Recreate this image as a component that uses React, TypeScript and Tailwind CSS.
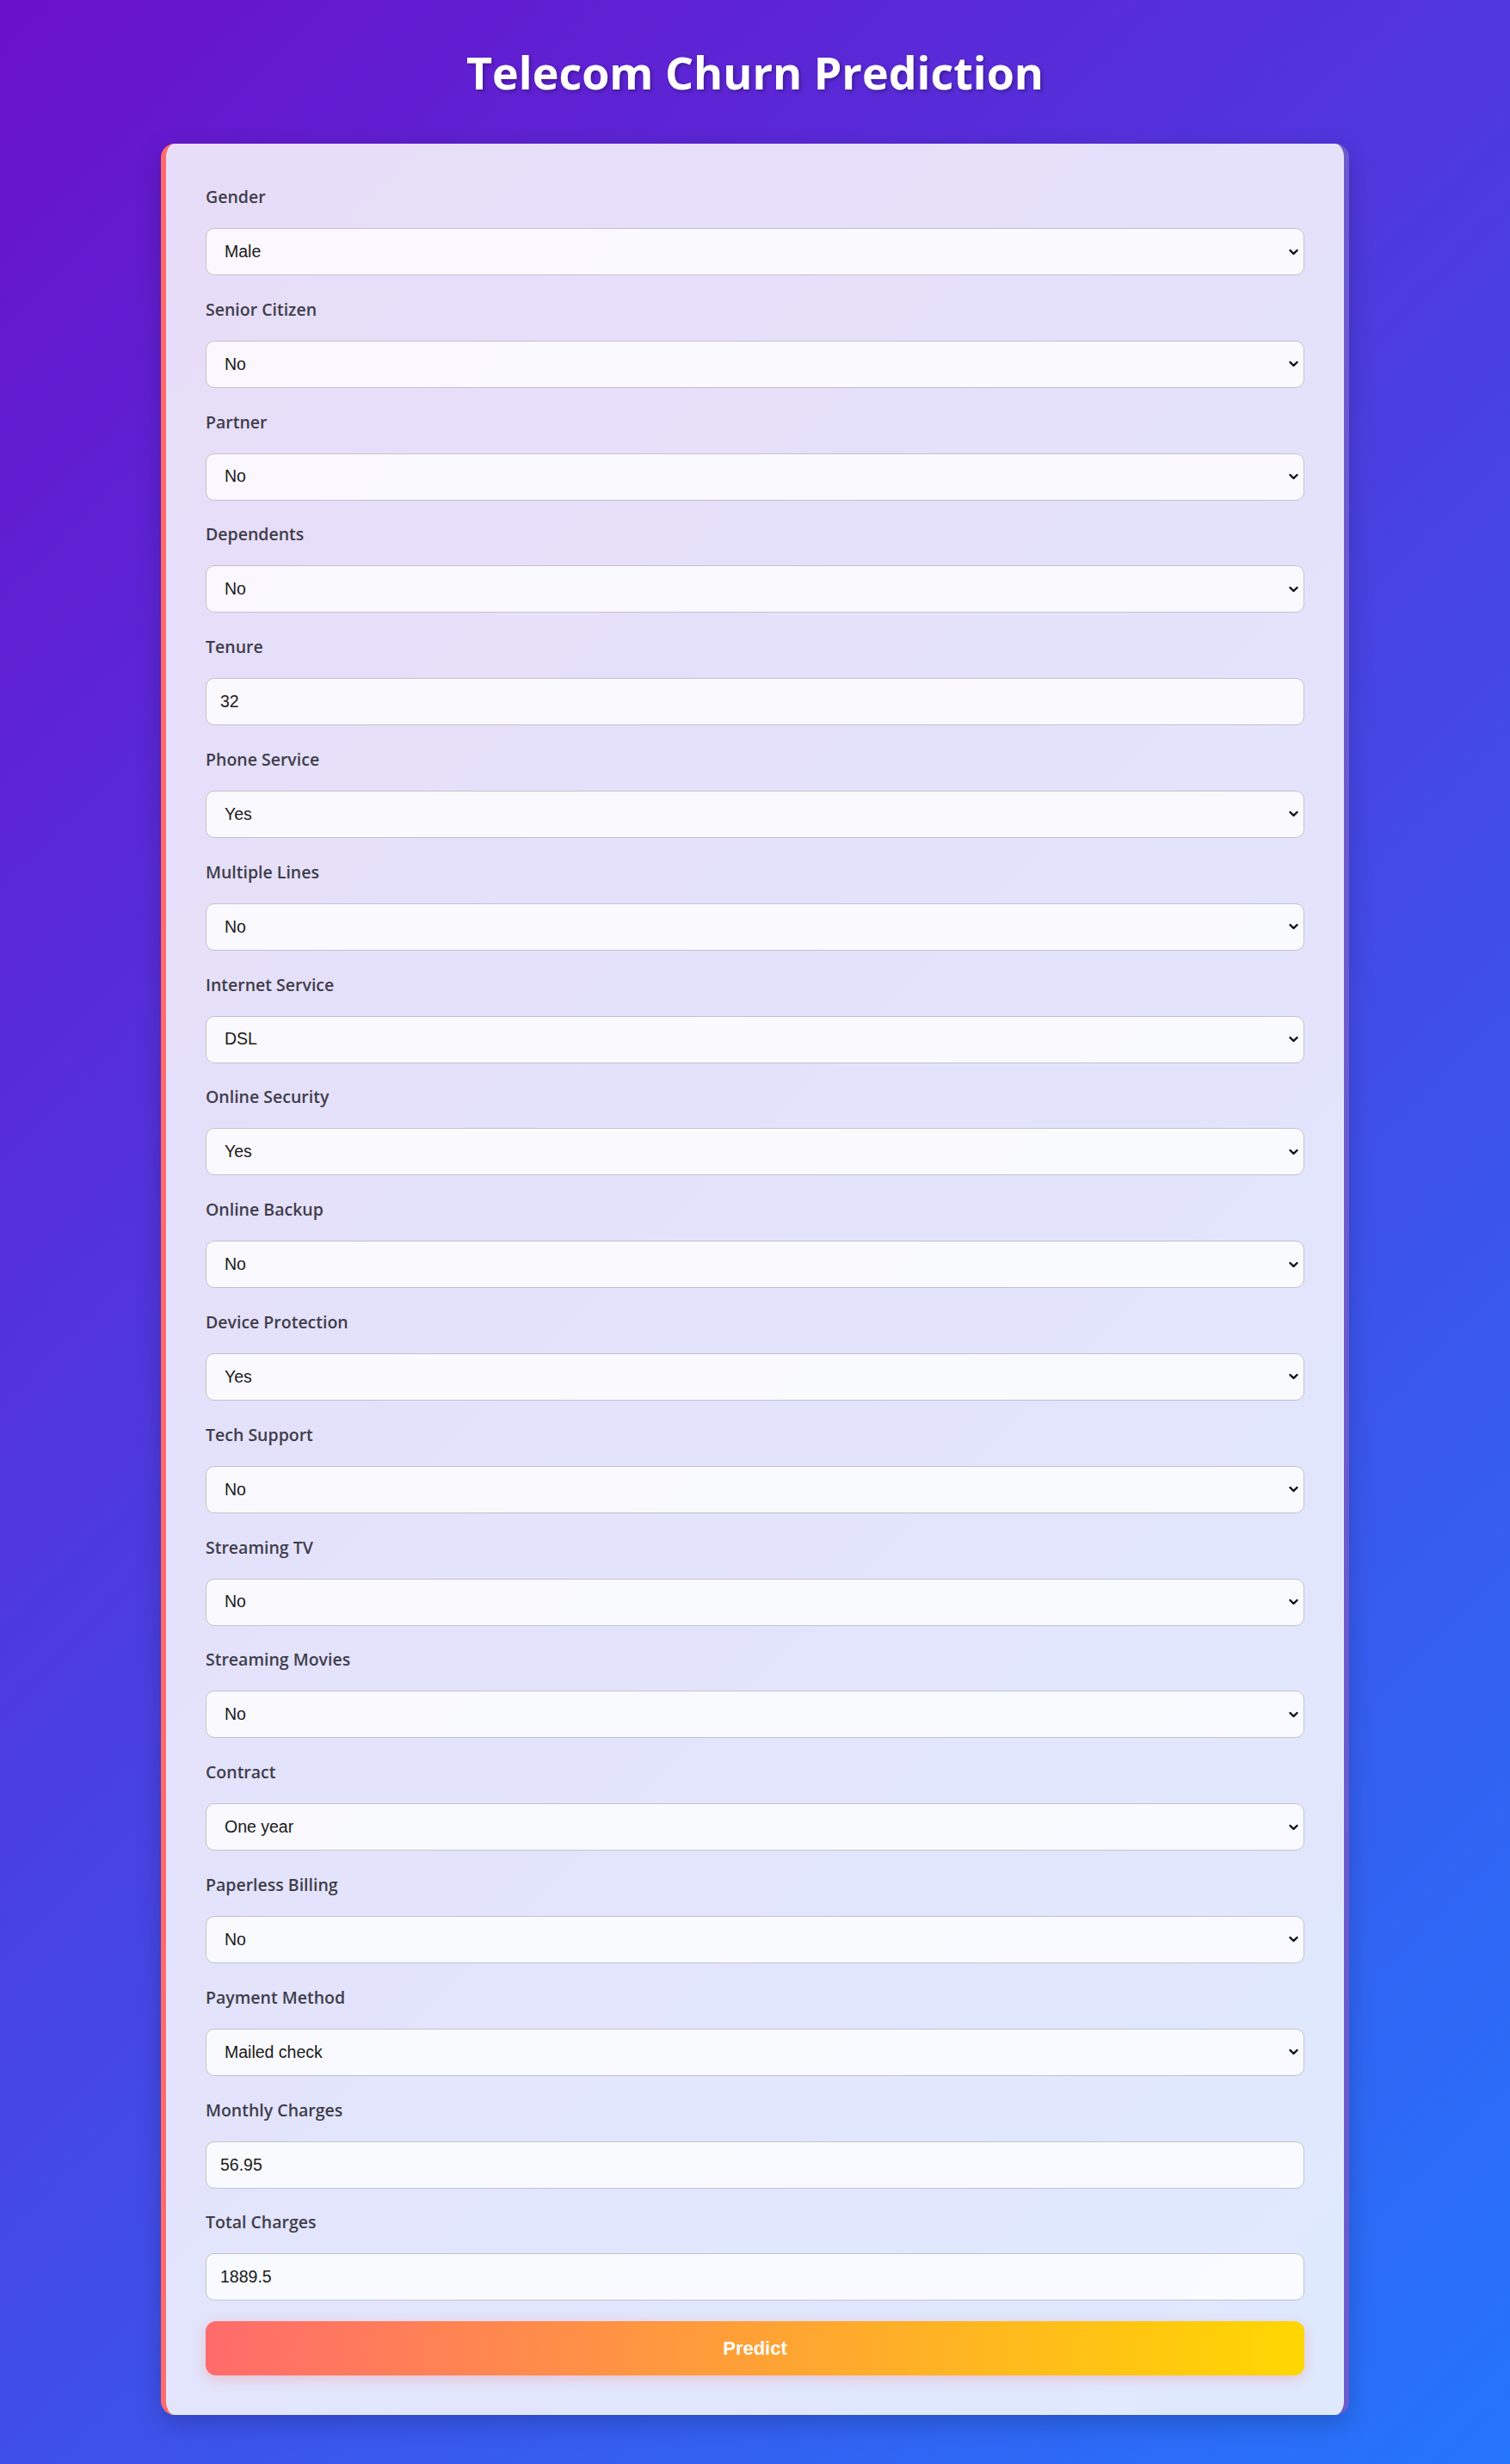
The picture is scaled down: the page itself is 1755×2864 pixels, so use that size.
import { useState } from "react";

type Field = {
  label: string;
  value: string;
  options?: string[];
};

const fields: Field[] = [
  { label: "Gender", value: "Male", options: ["Male", "Female"] },
  { label: "Senior Citizen", value: "No", options: ["No", "Yes"] },
  { label: "Partner", value: "No", options: ["Yes", "No"] },
  { label: "Dependents", value: "No", options: ["Yes", "No"] },
  { label: "Tenure", value: "32" },
  { label: "Phone Service", value: "Yes", options: ["Yes", "No"] },
  { label: "Multiple Lines", value: "No", options: ["Yes", "No", "No phone service"] },
  { label: "Internet Service", value: "DSL", options: ["DSL", "Fiber optic", "No"] },
  { label: "Online Security", value: "Yes", options: ["Yes", "No", "No internet service"] },
  { label: "Online Backup", value: "No", options: ["Yes", "No", "No internet service"] },
  { label: "Device Protection", value: "Yes", options: ["Yes", "No", "No internet service"] },
  { label: "Tech Support", value: "No", options: ["Yes", "No", "No internet service"] },
  { label: "Streaming TV", value: "No", options: ["Yes", "No", "No internet service"] },
  { label: "Streaming Movies", value: "No", options: ["Yes", "No", "No internet service"] },
  { label: "Contract", value: "One year", options: ["Month-to-month", "One year", "Two year"] },
  { label: "Paperless Billing", value: "No", options: ["Yes", "No"] },
  {
    label: "Payment Method",
    value: "Mailed check",
    options: ["Electronic check", "Mailed check", "Bank transfer (automatic)", "Credit card (automatic)"],
  },
  { label: "Monthly Charges", value: "56.95" },
  { label: "Total Charges", value: "1889.5" },
];

function Chevron() {
  return (
    <svg
      className="pointer-events-none absolute right-[7px] top-1/2 -translate-y-1/2"
      width="11"
      height="8"
      viewBox="0 0 11 8"
      fill="none"
    >
      <path d="M1.5 2 L5.5 6 L9.5 2" stroke="#111" strokeWidth="2.4" strokeLinecap="round" strokeLinejoin="round" />
    </svg>
  );
}

function FormField({ field }: { field: Field }) {
  const [value, setValue] = useState(field.value);
  const base =
    "w-full h-[55px] rounded-[10px] border border-[#c3c2cc] bg-white/80 text-[19.5px] text-[#1a1a1a] font-['Liberation_Sans',Arial,sans-serif] outline-none";

  return (
    <div className="flex flex-col">
      <label className="mb-[23px] text-[19.5px] leading-[26px] font-semibold text-[#3f3d4b] font-['Open_Sans',sans-serif]">
        {field.label}
      </label>
      {field.options ? (
        <div className="relative">
          <select
            className={base + " appearance-none pl-[21px] pr-8"}
            value={value}
            onChange={(e) => setValue(e.target.value)}
          >
            {field.options.map((o) => (
              <option key={o} value={o}>
                {o}
              </option>
            ))}
          </select>
          <Chevron />
        </div>
      ) : (
        <input
          className={base + " pl-[16px] pr-4"}
          type="text"
          value={value}
          onChange={(e) => setValue(e.target.value)}
        />
      )}
    </div>
  );
}

export default function App() {
  return (
    <div className="min-h-screen bg-[linear-gradient(135deg,#6a11cb_0%,#2575fc_100%)] pt-[52px] pb-[57px]">
      <h1 className="text-center text-[52px] leading-[64px] font-bold text-white font-['Open_Sans',sans-serif] [text-shadow:2px_2px_4px_rgba(0,0,0,0.3)]">
        Telecom Churn Prediction
      </h1>

      <form
        className="mx-auto mt-[51px] w-[1381px] rounded-[16px] border-l-[6px] border-r-[6px] border-l-[#ff6b6b] border-r-[#6a5acd] bg-white/85 pt-[49px] pb-[46px] pl-[46px] pr-[46px] shadow-[0_10px_30px_rgba(0,0,0,0.2)]"
        onSubmit={(e) => e.preventDefault()}
      >
        <div className="flex flex-col gap-[26.8px]">
          {fields.map((f) => (
            <FormField key={f.label} field={f} />
          ))}
        </div>

        <button
          type="submit"
          className="mt-[24px] h-[63px] w-full rounded-[12px] bg-[linear-gradient(90deg,#ff6b6b_0%,#ffd700_100%)] text-[22px] font-bold text-white font-['Liberation_Sans',Arial,sans-serif] shadow-[0_4px_15px_rgba(255,107,107,0.3)]"
        >
          Predict
        </button>
      </form>
    </div>
  );
}
